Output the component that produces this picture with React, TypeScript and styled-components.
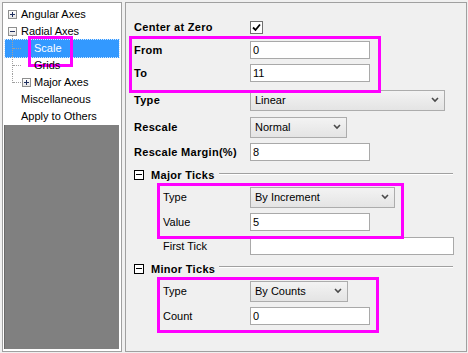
import React from "react";
import styled, { createGlobalStyle, css } from "styled-components";

const GlobalStyle = createGlobalStyle`
  html, body {
    margin: 0;
    padding: 0;
    background: #f0f0f0;
  }
  * {
    box-sizing: border-box;
  }
`;

const Window = styled.div`
  width: 468px;
  height: 353px;
  display: flex;
  gap: 3px;
  padding: 2px 1px 1px 2px;
  background: #f0f0f0;
  font-family: "Liberation Sans", Arial, sans-serif;
  font-size: 11px;
  color: #000;
`;

/* ---------- left tree ---------- */

const LeftPanel = styled.div`
  width: 120px;
  border: 1px solid #a0a0a0;
  background: #fff;
  display: flex;
  flex-direction: column;
`;

const Tree = styled.ul`
  list-style: none;
  margin: 0;
  padding: 3px 2px 0 2px;
`;

const TreeRow = styled.li<{ $selected?: boolean }>`
  height: 17px;
  display: flex;
  align-items: center;
  white-space: nowrap;
  ${(p) =>
    p.$selected &&
    css`
      background: #3399ff;
      color: #fff;
      box-shadow: 0 -1px 0 #3399ff, 0 1px 0 #3399ff;
      outline: 1px dotted #cfe6ff;
      outline-offset: 0;
    `}
`;

const Expander = styled.span<{ $open?: boolean; $tail?: boolean }>`
  position: relative;
  width: 9px;
  height: 9px;
  border: 1px solid #8e8f8f;
  background: linear-gradient(#ffffff, #e6e6e6);
  flex: none;

  &::before {
    content: "";
    position: absolute;
    left: 1px;
    top: 3px;
    width: 5px;
    height: 1px;
    background: #1f2f5f;
  }

  ${(p) =>
    !p.$open &&
    css`
      &::after {
        content: "";
        position: absolute;
        left: 3px;
        top: 1px;
        width: 1px;
        height: 5px;
        background: #1f2f5f;
      }
    `}

  ${(p) =>
    p.$tail &&
    css`
      &::after {
        content: "";
        position: absolute;
        left: 3px;
        top: 8px;
        height: 5px;
        border-left: 1px dotted #a0a0a0;
      }
    `}
`;

const RootSlot = styled.span`
  display: flex;
  width: 16px;
  padding-left: 3px;
  flex: none;
`;

const Connector = styled.span<{ $last?: boolean }>`
  position: relative;
  margin-left: 7px;
  width: 10px;
  height: 17px;
  flex: none;

  &::before {
    content: "";
    position: absolute;
    left: 0;
    top: 0;
    height: ${(p) => (p.$last ? "9px" : "17px")};
    border-left: 1px dotted #a0a0a0;
  }
  &::after {
    content: "";
    position: absolute;
    left: 1px;
    top: 8px;
    width: 8px;
    border-top: 1px dotted #a0a0a0;
  }
`;

const ChildSlot = styled.span`
  display: flex;
  width: 12px;
  flex: none;
`;

const NodeLabel = styled.span<{ $marked?: boolean }>`
  position: relative;
  line-height: 17px;
  ${(p) =>
    p.$marked &&
    css`
      &::after {
        content: "";
        position: absolute;
        left: -6px;
        top: -4px;
        width: 39px;
        height: 25px;
        border: 3px solid #ff00ff;
      }
    `}
`;

const Filler = styled.div`
  flex: 1;
  margin: 0 2px 2px 1px;
  background: #808080;
  border-left: 1px solid #6a6a6a;
`;

/* ---------- right settings ---------- */

const Settings = styled.div`
  flex: 1;
  border: 1px solid #a0a0a0;
  padding-top: 13px;
  display: flex;
  flex-direction: column;
`;

const Row = styled.div<{ $h: number }>`
  height: ${(p) => p.$h}px;
  display: flex;
  align-items: center;
`;

const Label = styled.span<{ $indent?: boolean; $bold?: boolean }>`
  width: 124px;
  flex: none;
  padding-left: ${(p) => (p.$indent ? 37 : 8)}px;
  white-space: nowrap;
  ${(p) =>
    p.$bold &&
    css`
      font-weight: bold;
      letter-spacing: 0.3px;
    `}
`;

const Group = styled.div<{ $l: number; $t: number; $w: number; $hh: number }>`
  position: relative;
  &::after {
    content: "";
    position: absolute;
    left: ${(p) => p.$l}px;
    top: ${(p) => p.$t}px;
    width: ${(p) => p.$w}px;
    height: ${(p) => p.$hh}px;
    border: 3px solid #ff00ff;
    pointer-events: none;
  }
`;

const TextBox = styled.input<{ $w: number }>`
  width: ${(p) => p.$w}px;
  height: 18px;
  border: 1px solid #a9a9a9;
  background: #fff;
  padding: 0 0 0 2px;
  margin: 0;
  font-family: "Liberation Sans", Arial, sans-serif;
  font-size: 11px;
  color: #000;
  outline: none;
`;

const ComboBox = styled.div<{ $w: number }>`
  width: ${(p) => p.$w}px;
  height: 21px;
  border: 1px solid #acacac;
  background: linear-gradient(#f3f3f3, #e4e4e4);
  display: flex;
  align-items: center;
  justify-content: space-between;
  padding: 0 5px 0 4px;
`;

const CheckBox = styled.div`
  width: 13px;
  height: 13px;
  border: 1px solid #707070;
  background: #fff;
  display: flex;
  align-items: center;
  justify-content: center;
`;

const SectionHeader = styled.div<{ $h: number }>`
  height: ${(p) => p.$h}px;
  display: flex;
  align-items: center;
  padding: 0 13px 0 8px;
`;

const ToggleBox = styled.span`
  position: relative;
  width: 10px;
  height: 10px;
  border: 1px solid #000;
  background: #fff;
  flex: none;
  &::before {
    content: "";
    position: absolute;
    left: 1px;
    top: 3px;
    width: 6px;
    height: 1px;
    background: #000;
  }
`;

const SectionTitle = styled.span`
  margin-left: 7px;
  font-weight: bold;
  letter-spacing: 0.3px;
  white-space: nowrap;
`;

const Rule = styled.span`
  flex: 1;
  margin-left: 4px;
  margin-bottom: 3px;
  border-top: 1px solid #a0a0a0;
  border-bottom: 1px solid #fff;
`;

const Chevron = () => (
  <svg width="8" height="6" viewBox="0 0 8 6">
    <polyline points="1,1 4,4 7,1" fill="none" stroke="#4a4a4a" strokeWidth="1.6" />
  </svg>
);

const Check = () => (
  <svg width="9" height="9" viewBox="0 0 9 9">
    <polyline points="1,4.5 3.5,7 8,1.5" fill="none" stroke="#000" strokeWidth="1.8" />
  </svg>
);

const Combo = ({ w, value }: { w: number; value: string }) => (
  <ComboBox $w={w}>
    <span>{value}</span>
    <Chevron />
  </ComboBox>
);

const Section = ({ title, h }: { title: string; h: number }) => (
  <SectionHeader $h={h}>
    <ToggleBox />
    <SectionTitle>{title}</SectionTitle>
    <Rule />
  </SectionHeader>
);

export default function App() {
  return (
    <>
      <GlobalStyle />
      <Window>
        <LeftPanel>
          <Tree>
            <TreeRow>
              <RootSlot>
                <Expander />
              </RootSlot>
              <NodeLabel>Angular Axes</NodeLabel>
            </TreeRow>
            <TreeRow>
              <RootSlot>
                <Expander $open $tail />
              </RootSlot>
              <NodeLabel>Radial Axes</NodeLabel>
            </TreeRow>
            <TreeRow $selected>
              <Connector />
              <ChildSlot />
              <NodeLabel $marked>Scale</NodeLabel>
            </TreeRow>
            <TreeRow>
              <Connector />
              <ChildSlot />
              <NodeLabel>Grids</NodeLabel>
            </TreeRow>
            <TreeRow>
              <Connector $last />
              <ChildSlot>
                <Expander />
              </ChildSlot>
              <NodeLabel>Major Axes</NodeLabel>
            </TreeRow>
            <TreeRow>
              <RootSlot />
              <NodeLabel>Miscellaneous</NodeLabel>
            </TreeRow>
            <TreeRow>
              <RootSlot />
              <NodeLabel>Apply to Others</NodeLabel>
            </TreeRow>
          </Tree>
          <Filler />
        </LeftPanel>

        <Settings>
          <Row $h={22}>
            <Label $bold>Center at Zero</Label>
            <CheckBox>
              <Check />
            </CheckBox>
          </Row>
          <Group $l={3} $t={-2} $w={246} $hh={51}>
            <Row $h={23}>
              <Label $bold>From</Label>
              <TextBox $w={120} value="0" readOnly />
            </Row>
            <Row $h={24}>
              <Label $bold>To</Label>
              <TextBox $w={120} value="11" readOnly />
            </Row>
          </Group>
          <Row $h={30}>
            <Label $bold>Type</Label>
            <Combo w={195} value="Linear" />
          </Row>
          <Row $h={24}>
            <Label $bold>Rescale</Label>
            <Combo w={97} value="Normal" />
          </Row>
          <Row $h={26}>
            <Label $bold>Rescale Margin(%)</Label>
            <TextBox $w={120} value="8" readOnly />
          </Row>
          <Section title="Major Ticks" h={20} />
          <Group $l={31} $t={-2} $w={241} $hh={50}>
            <Row $h={24}>
              <Label $indent>Type</Label>
              <Combo w={145} value="By Increment" />
            </Row>
            <Row $h={26}>
              <Label $indent>Value</Label>
              <TextBox $w={120} value="5" readOnly />
            </Row>
          </Group>
          <Row $h={22}>
            <Label $indent>First Tick</Label>
            <TextBox $w={204} value="" readOnly />
          </Row>
          <Section title="Minor Ticks" h={23} />
          <Group $l={31} $t={-3} $w={216} $hh={50}>
            <Row $h={22}>
              <Label $indent>Type</Label>
              <Combo w={98} value="By Counts" />
            </Row>
            <Row $h={28}>
              <Label $indent>Count</Label>
              <TextBox $w={120} value="0" readOnly />
            </Row>
          </Group>
        </Settings>
      </Window>
    </>
  );
}
